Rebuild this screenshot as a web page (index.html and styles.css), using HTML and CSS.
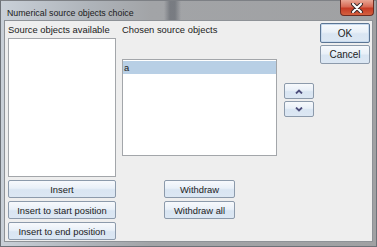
FILE: index.html
```html
<!DOCTYPE html>
<html lang="en">
<head>
    <meta charset="UTF-8">
    <meta name="viewport" content="width=device-width, initial-scale=1.0">
    <title>Numerical source objects choice</title>
    <link rel="stylesheet" href="styles.css">
</head>
<body>
    <div class="window">
        <div class="titlebar">
            <span class="title">Numerical source objects choice</span>
            <div class="close-btn">
                <svg width="14" height="10" viewBox="0 0 14 10">
                    <path d="M3 1 L11 9 M11 1 L3 9" stroke="#3b2a2a" stroke-width="4" stroke-linecap="round"/>
                    <path d="M3 1 L11 9 M11 1 L3 9" stroke="#ffffff" stroke-width="2" stroke-linecap="round"/>
                </svg>
            </div>
        </div>

        <div class="dialog-body">
            <div class="col-left">
                <div class="label">Source objects available</div>
                <div class="list list-available"></div>
                <button class="btn btn-wide first">Insert</button>
                <button class="btn btn-wide">Insert to start position</button>
                <button class="btn btn-wide">Insert to end position</button>
            </div>

            <div class="col-mid">
                <div class="label">Chosen source objects</div>
                <div class="list list-chosen">
                    <div class="list-item selected">a</div>
                </div>
                <div class="withdraw-group">
                    <button class="btn btn-withdraw">Withdraw</button>
                    <button class="btn btn-withdraw">Withdraw all</button>
                </div>
            </div>

            <div class="col-arrows">
                <button class="btn btn-arrow">
                    <svg width="8" height="5" viewBox="0 0 8 5"><polyline points="1,4.5 4,1.5 7,4.5" fill="none" stroke="#4e4f7c" stroke-width="1.8"/></svg>
                </button>
                <button class="btn btn-arrow">
                    <svg width="8" height="5" viewBox="0 0 8 5"><polyline points="1,0.5 4,3.5 7,0.5" fill="none" stroke="#4e4f7c" stroke-width="1.8"/></svg>
                </button>
            </div>

            <div class="col-right">
                <button class="btn btn-ok">OK</button>
                <button class="btn btn-cancel">Cancel</button>
            </div>
        </div>
    </div>
</body>
</html>
```

FILE: styles.css
```css
html, body {
    margin: 0;
    padding: 0;
}
body {
    width: 377px;
    height: 247px;
    overflow: hidden;
    font-family: "Liberation Sans", Arial, sans-serif;
}
.window {
    width: 377px;
    height: 247px;
    box-sizing: border-box;
    background: linear-gradient(to right, #c9d0d8 0px, #aeb3b9 90px, #a2a4a7 150px, #a0a1a3 377px);
    border: 1px solid #6d7278;
    border-top-color: #7d8085;
    padding: 0 3px 0 3px;
}
.titlebar {
    height: 19px;
    display: flex;
    align-items: flex-start;
    background: linear-gradient(to right, rgba(0,0,0,0) 160px, rgba(70,75,85,0.45) 166px, rgba(70,75,85,0.45) 171px, rgba(0,0,0,0) 177px);
}
.title {
    font-size: 8.8px;
    color: #1a1a1a;
    margin: 6px 0 0 3px;
    line-height: 12px;
}
.close-btn {
    margin-left: auto;
    width: 34px;
    height: 16px;
    box-sizing: border-box;
    border: 1px solid #6e2c22;
    border-top: none;
    border-radius: 0 0 4px 4px;
    background: linear-gradient(#e9a694 0%, #d86a55 45%, #c63b25 55%, #d4603f 100%);
    display: flex;
    align-items: center;
    justify-content: center;
    margin-top: -1px;
    margin-right: -1px;
}
.dialog-body {
    height: 222px;
    box-sizing: border-box;
    background: #eeeeee;
    border: 1px solid #8e9297;
    display: flex;
    padding: 0 0 0 3px;
    font-size: 9.4px;
    color: #222222;
}
.label {
    height: 17px;
    line-height: 17px;
    white-space: nowrap;
}
.list {
    background: #ffffff;
    border: 1px solid #a3a6aa;
    box-sizing: border-box;
}
.col-left {
    width: 108px;
    display: flex;
    flex-direction: column;
}
.list-available {
    height: 139px;
}
.btn {
    font-family: "Liberation Sans", Arial, sans-serif;
    font-size: 9.4px;
    color: #222222;
    background: linear-gradient(#f7f9fc 0%, #e9f0f8 45%, #d9e5f2 55%, #dce7f3 100%);
    border: 1px solid #8c9aab;
    border-radius: 2px;
    box-sizing: border-box;
    padding: 0;
    margin: 0;
    display: flex;
    align-items: center;
    justify-content: center;
}
.btn-wide {
    height: 18px;
    margin-top: 3px;
}
.col-mid {
    width: 155px;
    margin-left: 6px;
    display: flex;
    flex-direction: column;
}
.label + .list-chosen {
    margin-top: 21px;
}
.list-chosen {
    height: 97px;
    padding: 1px 0 0 0;
}
.list-item {
    height: 13px;
    line-height: 13px;
    padding-left: 1px;
}
.list-item.selected {
    background: #b8cfe5;
}
.withdraw-group {
    margin-top: 21px;
    display: flex;
    flex-direction: column;
    align-items: center;
}
.btn-withdraw {
    width: 71px;
    height: 18px;
    margin-top: 3px;
}
.col-arrows {
    width: 30px;
    margin-left: 7px;
    padding-top: 62px;
    display: flex;
    flex-direction: column;
    gap: 2px;
}
.btn-arrow {
    width: 30px;
    height: 16px;
}
.col-right {
    width: 50px;
    margin-left: 6px;
    padding-top: 2px;
    display: flex;
    flex-direction: column;
    gap: 2px;
}
.btn-ok {
    height: 20px;
    font-size: 10px;
    border-color: #5b7594;
    box-shadow: inset 0 0 0 1px #c8daee;
}
.btn-cancel {
    height: 19px;
    font-size: 10px;
}
```
